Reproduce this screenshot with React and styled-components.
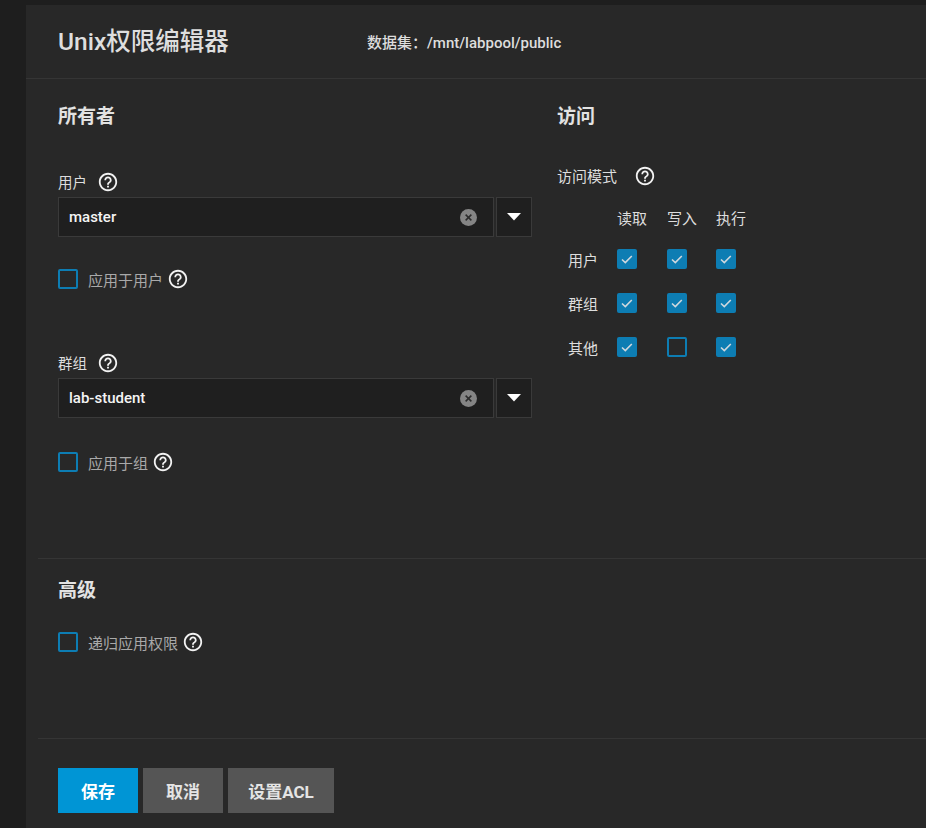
import React from 'react';
import styled, { createGlobalStyle } from 'styled-components';

const GlobalStyle = createGlobalStyle`
  html, body {
    margin: 0;
    padding: 0;
    background: #1e1e1e;
  }
  body {
    font-family: Roboto, "Noto Sans CJK SC", sans-serif;
    color: #dddddd;
  }
`;

function HelpIcon() {
  return (
    <HelpSvg viewBox="0 0 24 24">
      <path
        fill="currentColor"
        d="M11 18h2v-2h-2v2zm1-16C6.48 2 2 6.48 2 12s4.48 10 10 10 10-4.48 10-10S17.52 2 12 2zm0 18c-4.41 0-8-3.59-8-8s3.59-8 8-8 8 3.59 8 8-3.59 8-8 8zm0-14c-2.21 0-4 1.79-4 4h2c0-1.1.9-2 2-2s2 .9 2 2c0 2-3 1.75-3 5h2c0-2.25 3-2.5 3-5 0-2.21-1.79-4-4-4z"
      />
    </HelpSvg>
  );
}

function Check({ checked }) {
  return (
    <Box checked={checked}>
      {checked && (
        <svg width="20" height="20" viewBox="0 0 20 20">
          <polyline
            points="5,10.5 8.3,13.6 14.8,7"
            fill="none"
            stroke="#cfd8de"
            strokeWidth="1.6"
          />
        </svg>
      )}
    </Box>
  );
}

function SelectField({ label, value }) {
  return (
    <Field>
      <LabelRow>
        <FieldLabel>{label}</FieldLabel>
        <HelpIcon />
      </LabelRow>
      <SelectRow>
        <SelectBox>
          <SelectValue>{value}</SelectValue>
          <svg width="17" height="17" viewBox="0 0 16 16">
            <circle cx="8" cy="8" r="8" fill="#858585" />
            <path d="M5.3 5.3 L10.7 10.7 M10.7 5.3 L5.3 10.7" stroke="#2c2c2c" strokeWidth="1.4" />
          </svg>
        </SelectBox>
        <DropButton>
          <svg width="14" height="8" viewBox="0 0 14 8">
            <polygon points="0,0 14,0 7,7.5" fill="#ffffff" />
          </svg>
        </DropButton>
      </SelectRow>
    </Field>
  );
}

function CheckRow({ label, top }) {
  return (
    <CheckLine top={top}>
      <Check checked={false} />
      <CheckLabel>{label}</CheckLabel>
      <HelpIcon />
    </CheckLine>
  );
}

const modes = [
  { name: '用户', values: [true, true, true] },
  { name: '群组', values: [true, true, true] },
  { name: '其他', values: [true, false, true] },
];

export default function App() {
  return (
    <Page>
      <GlobalStyle />
      <Card>
        <Header>
          <Title>Unix权限编辑器</Title>
          <Dataset>数据集：/mnt/labpool/public</Dataset>
        </Header>
        <Content>
          <Columns>
            <LeftColumn>
              <SectionTitle>所有者</SectionTitle>
              <FieldGap size={42} />
              <SelectField label="用户" value="master" />
              <CheckRow label="应用于用户" top={32} />
              <FieldGap size={63} />
              <SelectField label="群组" value="lab-student" />
              <CheckRow label="应用于组" top={34} />
            </LeftColumn>
            <RightColumn>
              <SectionTitle>访问</SectionTitle>
              <ModeLabel>
                <FieldLabel>访问模式</FieldLabel>
                <HelpIcon />
              </ModeLabel>
              <ModeGrid>
                <span />
                <GridHead>读取</GridHead>
                <GridHead>写入</GridHead>
                <GridHead>执行</GridHead>
                {modes.map((m) => (
                  <React.Fragment key={m.name}>
                    <RowName>{m.name}</RowName>
                    {m.values.map((v, i) => (
                      <Cell key={i}>
                        <Check checked={v} />
                      </Cell>
                    ))}
                  </React.Fragment>
                ))}
              </ModeGrid>
            </RightColumn>
          </Columns>
          <Advanced>
            <SectionTitle>高级</SectionTitle>
            <CheckRow label="递归应用权限" top={29} />
          </Advanced>
          <Actions>
            <Button primary>保存</Button>
            <Button>取消</Button>
            <Button wide>设置ACL</Button>
          </Actions>
        </Content>
      </Card>
    </Page>
  );
}

/* Styles */

const Page = styled.div`
  min-height: 828px;
  padding: 5px 0 0 26px;
  box-sizing: border-box;
  display: flex;
`;

const Card = styled.div`
  flex: 1;
  background: #282828;
  min-height: 823px;
`;

const Header = styled.div`
  height: 68px;
  display: flex;
  align-items: center;
  padding: 0 0 5px 32px;
  border-bottom: 1px solid #353535;
`;

const Title = styled.h1`
  width: 309px;
  margin: 0;
  font-size: 24.5px;
  font-weight: 500;
  color: #dedede;
`;

const Dataset = styled.div`
  font-size: 15px;
  font-weight: 500;
  color: #dddddd;
  padding-top: 4px;
`;

const Content = styled.div`
  margin-left: 12px;
`;

const Columns = styled.div`
  display: flex;
  align-items: flex-start;
  gap: 25px;
  padding: 26px 0 86px 20px;
  border-bottom: 1px solid #353535;
`;

const LeftColumn = styled.div`
  width: 474px;
  display: flex;
  flex-direction: column;
`;

const RightColumn = styled.div`
  display: flex;
  flex-direction: column;
`;

const SectionTitle = styled.h2`
  margin: 0;
  font-size: 19px;
  line-height: 24px;
  font-weight: 700;
  color: #e2e2e2;
`;

const FieldGap = styled.div`
  height: ${(p) => p.size}px;
`;

const Field = styled.div`
  display: flex;
  flex-direction: column;
  gap: 5px;
`;

const LabelRow = styled.div`
  display: flex;
  align-items: center;
  gap: 10px;
  height: 21px;
`;

const FieldLabel = styled.span`
  font-size: 14.5px;
  color: #dddddd;
`;

const HelpSvg = styled.svg`
  width: 22px;
  height: 22px;
  color: #f2f2f2;
  flex: none;
`;

const SelectRow = styled.div`
  display: flex;
  gap: 2px;
  height: 40px;
`;

const SelectBox = styled.div`
  flex: 1;
  display: flex;
  align-items: center;
  justify-content: space-between;
  padding: 0 16px 0 10px;
  background: #1f1f1f;
  border: 1px solid #3a3a3a;
  box-sizing: border-box;
`;

const SelectValue = styled.span`
  font-size: 15px;
  font-weight: 500;
  color: #f4f4f4;
`;

const DropButton = styled.div`
  width: 36px;
  display: flex;
  align-items: center;
  justify-content: center;
  background: #1f1f1f;
  border: 1px solid #3a3a3a;
  box-sizing: border-box;
`;

const CheckLine = styled.div`
  display: flex;
  align-items: center;
  height: 20px;
  margin-top: ${(p) => p.top}px;
`;

const CheckLabel = styled.span`
  font-size: 15px;
  color: #a9a9a9;
  margin: 0 4px 0 10px;
`;

const Box = styled.div`
  width: 20px;
  height: 20px;
  box-sizing: border-box;
  border-radius: 2px;
  flex: none;
  background: ${(p) => (p.checked ? '#0d7db3' : 'transparent')};
  border: ${(p) => (p.checked ? 'none' : '2px solid #0d7db3')};

  svg {
    display: block;
  }
`;

const ModeLabel = styled.div`
  display: flex;
  align-items: center;
  gap: 17px;
  height: 21px;
  margin-top: 36px;

  span {
    font-size: 15px;
  }
`;

const ModeGrid = styled.div`
  display: grid;
  grid-template-columns: 60px 50px 49px 50px;
  grid-template-rows: 28px repeat(3, 44px);
  margin-top: 23px;
`;

const GridHead = styled.span`
  font-size: 15px;
  line-height: 20px;
  color: #dddddd;
`;

const RowName = styled.span`
  display: flex;
  align-items: center;
  padding-left: 11px;
  font-size: 15px;
  color: #dddddd;
`;

const Cell = styled.div`
  display: flex;
  align-items: center;
`;

const Advanced = styled.div`
  padding: 20px 0 86px 20px;
  border-bottom: 1px solid #353535;
`;

const Actions = styled.div`
  display: flex;
  gap: 5px;
  padding: 29px 0 0 20px;
`;

const Button = styled.button`
  width: ${(p) => (p.wide ? '106px' : '80px')};
  height: 45px;
  border: none;
  border-radius: 0;
  padding: 0;
  font-family: Roboto, "Noto Sans CJK SC", sans-serif;
  font-size: 17px;
  font-weight: 700;
  color: ${(p) => (p.primary ? '#ffffff' : '#e4e4e4')};
  background: ${(p) => (p.primary ? '#0095d5' : '#555555')};
  cursor: pointer;
`;
